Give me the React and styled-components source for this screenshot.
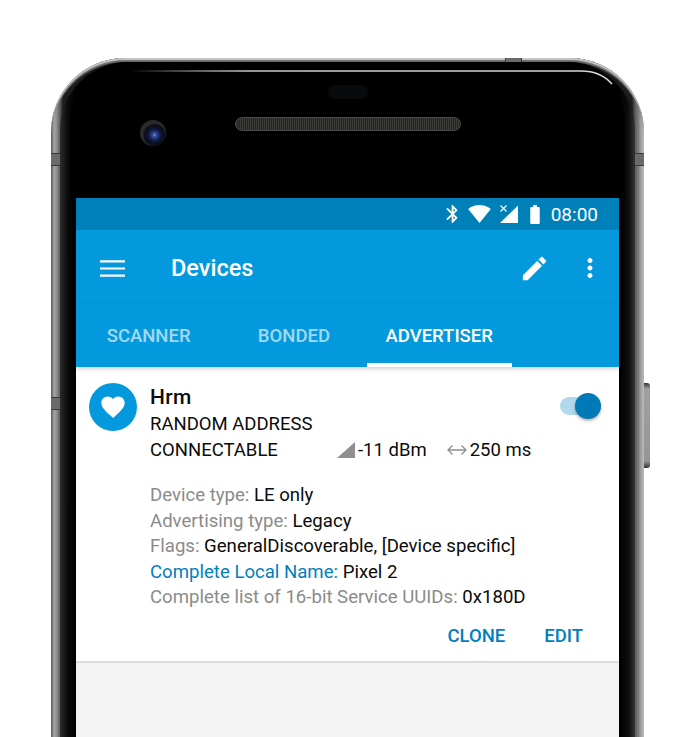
import styled, { createGlobalStyle } from "styled-components";

const GlobalStyle = createGlobalStyle`
  html, body {
    margin: 0;
    height: 737px;
    overflow: hidden;
    background: #ffffff;
    font-family: Roboto, "Liberation Sans", sans-serif;
  }
`;

const Phone = styled.div`
  position: relative;
  box-sizing: border-box;
  width: 593px;
  height: 679px;
  margin: 58px 0 0 51px;
  padding: 4px 9px 0;
  display: flex;
  border-radius: 74px 74px 0 0;
  background: linear-gradient(
    to right,
    #4c4c4c 0,
    #a6a6a6 3px,
    #8a8a8a 6px,
    #5c5c5c 9px,
    #1c1c1c 12px,
    #1c1c1c 581px,
    #5c5c5c 584px,
    #777777 587px,
    #a0a0a0 590px,
    #c0c0c0 593px
  );
  box-shadow: inset 0 2px 1px #c9c9c9, inset 0 4px 1px #6e6e6e;
`;

const Shell = styled.div`
  flex: 1;
  display: flex;
  flex-direction: column;
  border-radius: 68px 68px 0 0;
  background: linear-gradient(
    to right,
    #2c2c2c 0,
    #0a0a0a 8px,
    #000000 16px,
    #000000 559px,
    #0c0c0c 568px,
    #343434 575px
  );
  padding: 0 16px;
`;

const Bezel = styled.div`
  height: 136px;
  flex: none;
  display: flex;
  flex-direction: column;
  background: #000000;
  margin: 0 -6px;
  padding: 0 6px;
  border-radius: 60px 60px 0 0;
`;

const Sensor = styled.div`
  width: 40px;
  height: 14px;
  margin: 23px auto 0;
  border-radius: 7px;
  background: #090a0e;
`;

const EarRow = styled.div`
  display: flex;
  align-items: flex-start;
  margin-top: 21px;
  padding-left: 64px;
  gap: 69px;
`;

const Camera = styled.div`
  width: 26px;
  height: 26px;
  flex: none;
  border-radius: 50%;
  background: radial-gradient(
    circle at 56% 58%,
    #7388d8 0,
    #2f4496 11%,
    #0e1638 30%,
    #0a0c18 46%,
    #2b2b2d 58%,
    #262628 88%,
    #000000 100%
  );
`;

const Speaker = styled.div`
  width: 226px;
  height: 14px;
  margin-top: -3px;
  box-sizing: border-box;
  border: 1px solid #4a4a46;
  border-radius: 7px;
  background: repeating-linear-gradient(to right, #3b3b37 0, #3b3b37 1px, #23231f 1px, #23231f 2px);
`;

const Screen = styled.div`
  flex: 1;
  display: flex;
  flex-direction: column;
  background: #f4f4f4;
`;

const StatusBar = styled.div`
  height: 32px;
  flex: none;
  display: flex;
  align-items: center;
  justify-content: flex-end;
  padding-right: 21px;
  background: #0080b9;
  color: #ffffff;
`;

const Glyph = styled.svg`
  display: block;
  flex: none;
  fill: #ffffff;
  width: ${(p) => p.$w}px;
  height: ${(p) => p.$h}px;
  margin-right: ${(p) => p.$gap || 0}px;
`;

const Clock = styled.span`
  font-size: 19px;
  line-height: 1;
  margin-left: 10px;
`;

const AppBar = styled.div`
  box-sizing: border-box;
  height: 74px;
  flex: none;
  display: flex;
  align-items: center;
  padding: 2px 14px 0 24px;
  background: #0399dc;
  color: #ffffff;
`;

const Title = styled.div`
  flex: 1;
  margin-left: 46px;
  font-size: 23.5px;
  font-weight: 500;
`;

const Tabs = styled.div`
  height: 63px;
  flex: none;
  display: flex;
  background: #0399dc;
  box-shadow: 0 2px 4px rgba(0, 0, 0, 0.18);
  position: relative;
`;

const Tab = styled.div`
  box-sizing: border-box;
  width: 145.3px;
  display: flex;
  align-items: center;
  justify-content: center;
  padding-top: 4px;
  font-size: 18.5px;
  font-weight: 500;
  color: ${(p) => (p.$active ? "#ffffff" : "rgba(255, 255, 255, 0.65)")};
  border-bottom: 4px solid ${(p) => (p.$active ? "#ffffff" : "transparent")};
`;

const Card = styled.div`
  flex: none;
  height: 296px;
  box-sizing: border-box;
  display: flex;
  flex-direction: column;
  padding: 16px 36px 0 13px;
  background: #ffffff;
  border-bottom: 2px solid #dcdcdc;
`;

const Head = styled.div`
  display: flex;
  align-items: flex-start;
`;

const Avatar = styled.div`
  width: 48px;
  height: 48px;
  flex: none;
  display: flex;
  align-items: center;
  justify-content: center;
  border-radius: 50%;
  background: #0399dc;
`;

const HeadText = styled.div`
  flex: 1;
  margin-left: 13px;
  font-size: 18.5px;
  line-height: 26px;
  color: #0b0b0b;
`;

const Name = styled.div`
  font-size: 21px;
  font-weight: 500;
  letter-spacing: 0.4px;
  line-height: 28px;
`;

const MetaRow = styled.div`
  display: flex;
  align-items: center;
`;

const MetaLabel = styled.span`
  width: 187px;
`;

const Stat = styled.span`
  display: flex;
  align-items: center;
  margin-right: ${(p) => p.$gap || 0}px;
`;

const StatIcon = styled.svg`
  display: block;
  flex: none;
  margin-right: 3px;
`;

const Toggle = styled.div`
  position: relative;
  width: 41px;
  height: 18px;
  margin-top: 14px;
  margin-right: -18px;
  border-radius: 9px;
  background: #b0d9ec;
`;

const Thumb = styled.div`
  position: absolute;
  right: 0;
  top: -4px;
  width: 26px;
  height: 26px;
  border-radius: 50%;
  background: #0079b6;
  box-shadow: 0 2px 3px rgba(0, 0, 0, 0.3);
`;

const Details = styled.div`
  margin: 20px 0 0 61px;
  font-size: 18.6px;
  line-height: 25.5px;
  color: #0b0b0b;
  white-space: nowrap;
`;

const Key = styled.span`
  color: ${(p) => (p.$link ? "#0080bd" : "#8b8b8b")};
`;

const Actions = styled.div`
  display: flex;
  justify-content: flex-end;
  gap: 39px;
  margin-top: 12px;
`;

const Action = styled.span`
  font-size: 18.5px;
  font-weight: 500;
  line-height: 26px;
  color: #0080bd;
`;

const Notch = styled.div`
  position: absolute;
  top: ${(p) => p.$top}px;
  left: ${(p) => p.$left}px;
  width: ${(p) => p.$w}px;
  height: ${(p) => p.$h}px;
  box-sizing: border-box;
  background: #6a6a6a;
  border: 1px solid #3a3a3a;
  border-width: ${(p) => p.$borders};
`;

const SideButton = styled.div`
  position: absolute;
  top: 325px;
  left: 593px;
  width: 6px;
  height: 85px;
  border-radius: 0 3px 3px 0;
  background: linear-gradient(to bottom, #333 0, #a0a0a0 6px, #969696 78px, #333 85px);
`;

const Glint = styled.svg`
  position: absolute;
  top: 0;
  left: 0;
  pointer-events: none;
`;

const Row = ({ label, value, link }) => (
  <div>
    <Key $link={link}>{label}:</Key> {value}
  </div>
);

export default function App() {
  return (
    <>
      <GlobalStyle />
      <Phone>
        <Shell>
          <Bezel>
            <Sensor />
            <EarRow>
              <Camera />
              <Speaker />
            </EarRow>
          </Bezel>
          <Screen>
            <StatusBar>
              <Glyph viewBox="5 2 12.71 20" $w={12} $h={18} $gap={10}>
                <path d="M17.71 7.71L12 2h-1v7.59L6.41 5 5 6.41 10.59 12 5 17.59 6.41 19 11 14.41V22h1l5.71-5.71-4.3-4.29 4.3-4.29zM13 5.83l1.88 1.88L13 9.59V5.83zm1.88 10.46L13 18.17v-3.76l1.88 1.88z" />
              </Glyph>
              <Glyph viewBox="0.36 3 23.28 18.5" $w={23} $h={18} $gap={9}>
                <path d="M12.01 21.49L23.64 7c-.45-.34-4.93-4-11.64-4C5.28 3 .81 6.66.36 7l11.64 14.5.01-.01z" />
              </Glyph>
              <Glyph viewBox="0 0 18 18" $w={18} $h={18} $gap={11}>
                <path d="M0 18L18 0.5V18z" />
                <path d="M0.5 0.5L6.5 6.5M6.5 0.5L0.5 6.5" stroke="#ffffff" strokeWidth="1.2" fill="none" />
              </Glyph>
              <Glyph viewBox="7 2 10 20" $w={12} $h={19}>
                <path d="M15.67 4H14V2h-4v2H8.33C7.6 4 7 4.6 7 5.33v15.33C7 21.4 7.6 22 8.33 22h7.33c.74 0 1.34-.6 1.34-1.33V5.33C17 4.6 16.4 4 15.67 4z" />
              </Glyph>
              <Clock>08:00</Clock>
            </StatusBar>
            <AppBar>
              <Glyph viewBox="0 0 18 12" $w={25} $h={17}>
                <path d="M0 0h18v1.6H0zM0 5.2h18v1.6H0zM0 10.4h18V12H0z" />
              </Glyph>
              <Title>Devices</Title>
              <Glyph viewBox="0 0 24 24" $w={31} $h={31} $gap={25}>
                <path d="M3 17.25V21h3.75L17.81 9.94l-3.75-3.75L3 17.25zM20.71 7.04c.39-.39.39-1.02 0-1.41l-2.34-2.34c-.39-.39-1.02-.39-1.41 0l-1.83 1.83 3.75 3.75 1.83-1.83z" />
              </Glyph>
              <Glyph viewBox="0 0 24 24" $w={30} $h={30}>
                <path d="M12 8c1.1 0 2-.9 2-2s-.9-2-2-2-2 .9-2 2 .9 2 2 2zm0 2c-1.1 0-2 .9-2 2s.9 2 2 2 2-.9 2-2-.9-2-2-2zm0 6c-1.1 0-2 .9-2 2s.9 2 2 2 2-.9 2-2-.9-2-2-2z" />
              </Glyph>
            </AppBar>
            <Tabs>
              <Tab>SCANNER</Tab>
              <Tab>BONDED</Tab>
              <Tab $active>ADVERTISER</Tab>
            </Tabs>
            <Card>
              <Head>
                <Avatar>
                  <Glyph viewBox="0 0 24 24" $w={28} $h={28}>
                    <path d="M12 21.35l-1.45-1.32C5.4 15.36 2 12.28 2 8.5 2 5.42 4.42 3 7.5 3c1.74 0 3.41.81 4.5 2.09C13.09 3.81 14.76 3 16.5 3 19.58 3 22 5.42 22 8.5c0 3.78-3.4 6.86-8.55 11.54L12 21.35z" />
                  </Glyph>
                </Avatar>
                <HeadText>
                  <Name>Hrm</Name>
                  <div>RANDOM ADDRESS</div>
                  <MetaRow>
                    <MetaLabel>CONNECTABLE</MetaLabel>
                    <Stat $gap={20}>
                      <StatIcon width="18" height="16" viewBox="0 0 18 16">
                        <path d="M0 16L18 0V16z" fill="#8f8f8f" />
                      </StatIcon>
                      -11 dBm
                    </Stat>
                    <Stat>
                      <StatIcon width="20" height="12" viewBox="0 0 20 12">
                        <path d="M5.5 1.5L1 6l4.5 4.5M14.5 1.5L19 6l-4.5 4.5M1 6h18" fill="none" stroke="#8f8f8f" strokeWidth="1.3" />
                      </StatIcon>
                      250 ms
                    </Stat>
                  </MetaRow>
                </HeadText>
                <Toggle>
                  <Thumb />
                </Toggle>
              </Head>
              <Details>
                <Row label="Device type" value="LE only" />
                <Row label="Advertising type" value="Legacy" />
                <Row label="Flags" value="GeneralDiscoverable, [Device specific]" />
                <Row label="Complete Local Name" value="Pixel 2" link />
                <Row label="Complete list of 16-bit Service UUIDs" value="0x180D" />
              </Details>
              <Actions>
                <Action>CLONE</Action>
                <Action>EDIT</Action>
              </Actions>
            </Card>
          </Screen>
        </Shell>
        <Notch $top={95} $left={0} $w={9} $h={13} $borders="1px 0" />
        <Notch $top={339} $left={0} $w={9} $h={13} $borders="1px 0" />
        <Notch $top={95} $left={584} $w={9} $h={13} $borders="1px 0" />
        <Notch $top={0} $left={454} $w={17} $h={4} $borders="0 1px" />
        <SideButton />
        <Glint width="593" height="40" viewBox="0 0 593 40">
          <defs>
            <linearGradient id="glint" x1="0" x2="1" y1="0" y2="0">
              <stop offset="0" stopColor="#ffffff" stopOpacity="0" />
              <stop offset="0.25" stopColor="#c8c8c8" />
              <stop offset="1" stopColor="#d8d8d8" />
            </linearGradient>
          </defs>
          <path d="M79 13H530C545 13 554 18 561 26" fill="none" stroke="url(#glint)" strokeWidth="1.6" />
        </Glint>
      </Phone>
    </>
  );
}
